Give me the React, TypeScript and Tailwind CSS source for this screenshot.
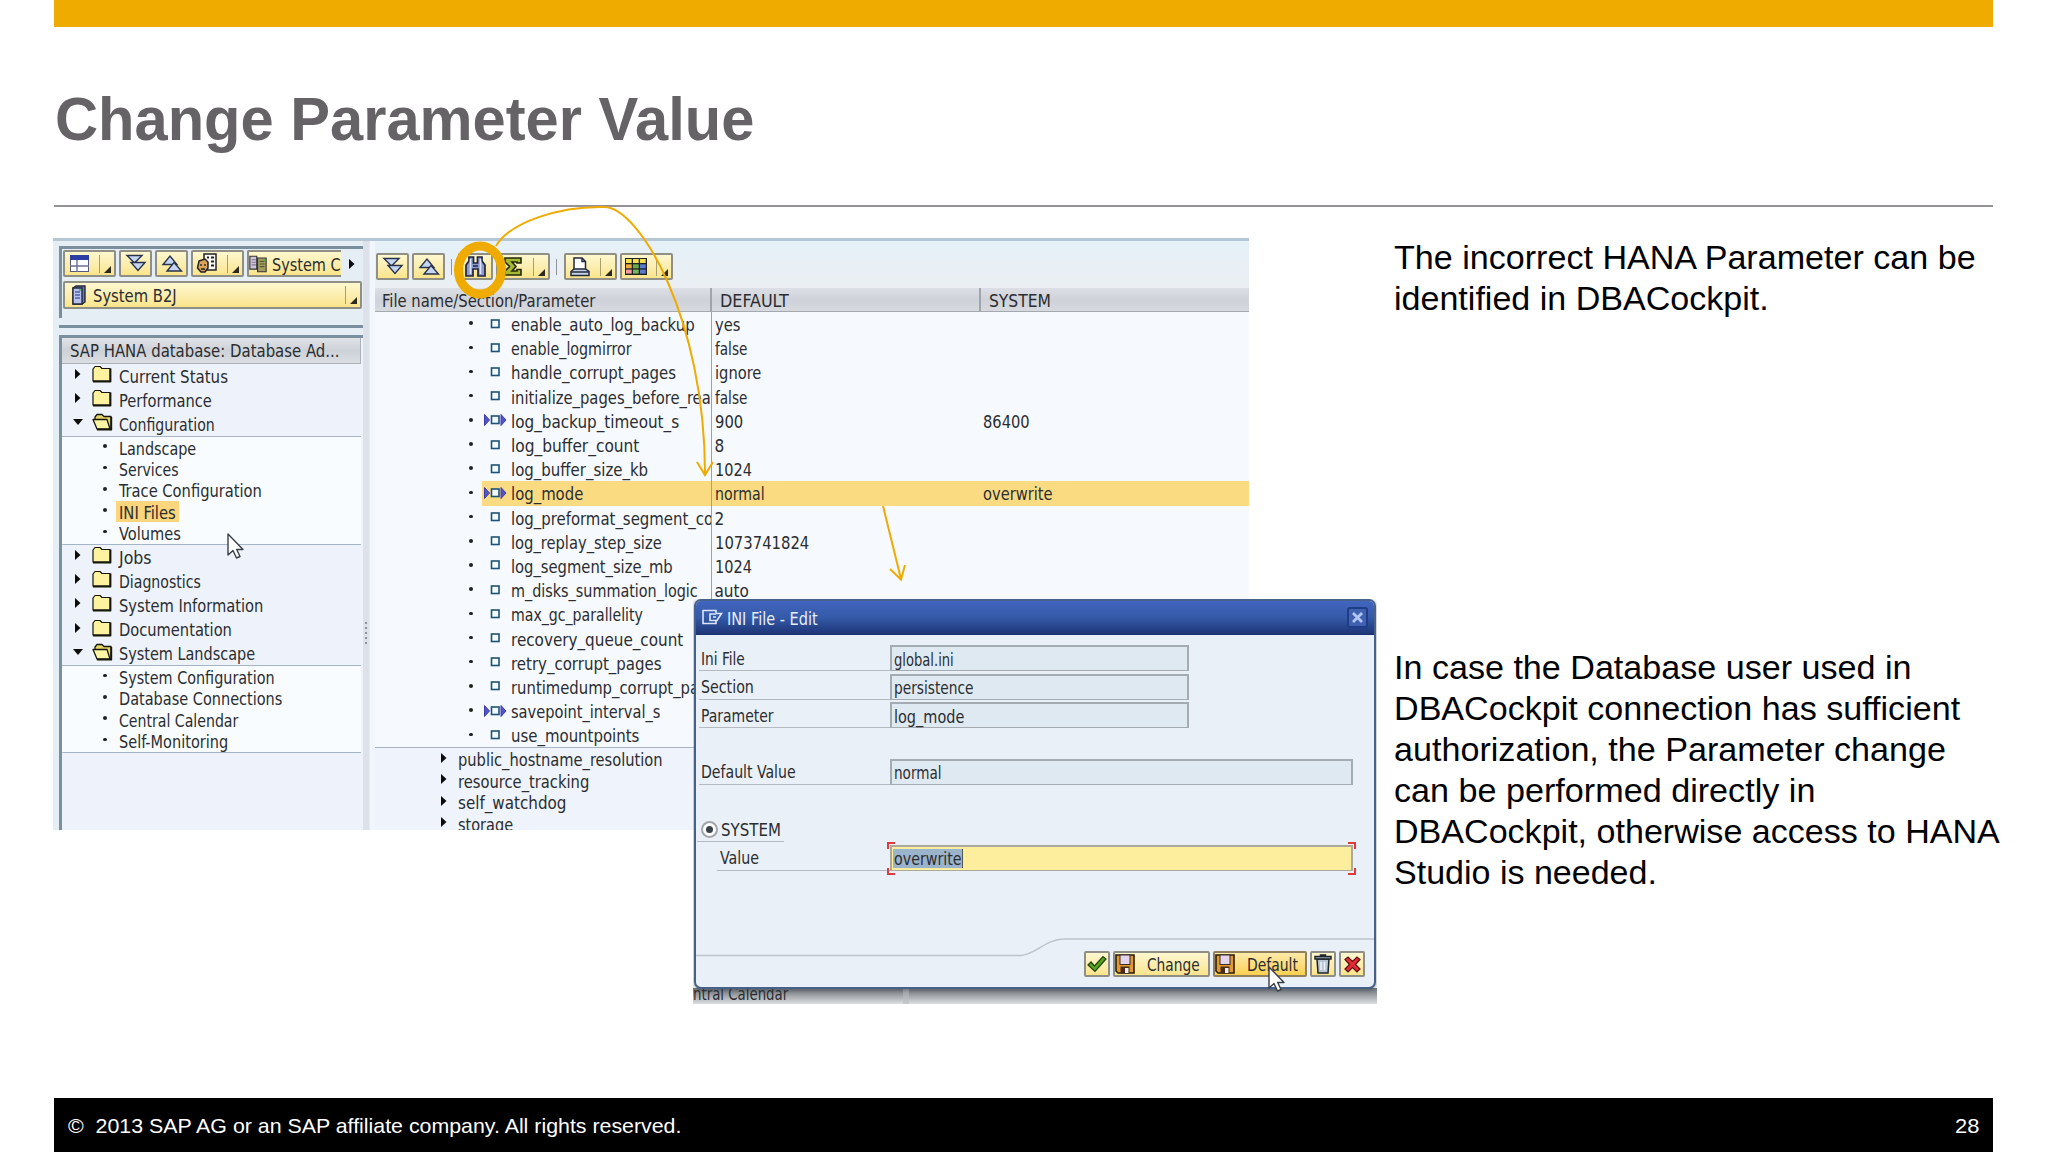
import { useLayoutEffect, useRef, useState } from "react";
import type { ReactNode } from "react";

/* One line of text condensed or widened to a given width. */
function Fit({ w, big, children }: { w: number; big?: boolean; children: ReactNode }) {
  const ref = useRef<HTMLSpanElement>(null);
  const [scale, setScale] = useState(1);
  useLayoutEffect(() => {
    if (ref.current) setScale(w / ref.current.offsetWidth);
  }, [w]);
  return (
    <span className={big ? "block shrink-0 whitespace-nowrap" : "block shrink-0 whitespace-nowrap pt-[3px]"} style={{ width: w }}>
      <span ref={ref} className="inline-block origin-left" style={{ transform: `scaleX(${scale})` }}>
        {children}
      </span>
    </span>
  );
}

const BTN =
  "flex shrink-0 items-center rounded-[2px] border-2 border-[#908f86] bg-linear-to-b from-[#fff7cf] via-[#fbeeb0] to-[#fbe48a]";

function DropMark() {
  return (
    <span className="flex h-[18px] w-[15px] shrink-0 items-end justify-center border-l border-[#a89f70]">
      <svg width="7" height="7" viewBox="0 0 7 7"><path d="M7 0V7H0Z" fill="#2a2a20" /></svg>
    </span>
  );
}

function ExpandIcon() {
  return (
    <svg width="22" height="19" viewBox="0 0 22 19" fill="#c5d6f3" stroke="#28324a" strokeWidth="1.4">
      <path d="M2 1.5H17L9.5 9Z" /><path d="M6 8.5H20L13 16.5Z" />
    </svg>
  );
}
function CollapseIcon() {
  return (
    <svg width="22" height="19" viewBox="0 0 22 19" fill="#c5d6f3" stroke="#28324a" strokeWidth="1.4">
      <path d="M2 10.5H16L9 2Z" /><path d="M6 17H20.500L13 8.500Z" />
    </svg>
  );
}
function LayoutIcon() {
  return (
    <svg width="19" height="17" viewBox="0 0 19 17">
      <rect x=".5" y=".5" width="18" height="16" fill="#fff" stroke="#55597a" />
      <rect x="0" y="0" width="19" height="5" fill="#2d3fa5" />
      <path d="M7 5V17M7 11H19M0 11H7" stroke="#6e7196" strokeWidth="1.4" />
    </svg>
  );
}
function PersonIcon() {
  return (
    <svg width="22" height="21" viewBox="0 0 22 21" stroke="#222">
      <rect x="8" y="1" width="12" height="16" fill="#f8f8f4" strokeWidth="1.500" />
      <path d="M11 4.500h2M15 4.500h3M15 8.500h3M15 12.500h3" strokeWidth="2" />
      <path d="M3 8L9 6L12 9V15L9 19H5L1.500 15Z" fill="#d9a35c" strokeWidth="1.500" />
      <path d="M5 11v2M9 11v2M5 16h4" strokeWidth="1.300" />
    </svg>
  );
}
function ServerPairIcon() {
  return (
    <svg width="21" height="20" viewBox="0 0 21 20" stroke="#333" strokeWidth="1.300">
      <path d="M1 1H9V16H1Z" fill="#cfc3da" /><path d="M3 5H8M3 8H8M3 11H8" stroke="#82779a" />
      <path d="M10 3H20V19H10Z" fill="#a39d62" /><path d="M12.500 7H18M12.500 10H18M12.500 13H18" stroke="#5c5930" />
      <path d="M17 5.500h2" stroke="#3cc04a" strokeWidth="2" />
    </svg>
  );
}
function ServerIcon() {
  return (
    <svg width="14" height="20" viewBox="0 0 14 20" stroke="#26283c" strokeWidth="1.400">
      <path d="M1 3L4 1H13V17L10 19H1Z" fill="#6b75b5" /><path d="M1 3H10V19H1Z" fill="#b6c1f0" />
      <path d="M3 7H8M3 10H8M3 13H8" stroke="#5661a4" />
      <path d="M7 5h2" stroke="#39b54a" strokeWidth="1.500" />
    </svg>
  );
}
function BinocularsIcon() {
  return (
    <svg width="21" height="21" viewBox="0 0 21 21">
      <path d="M4 1H8.500V7H12.500V1H17V5L20 9V20H13V13H8V20H1V9L4 5Z" fill="#8e9bd2" stroke="#20243c" strokeWidth="1.700" />
      <path d="M5.500 3V18M15.500 3V18" stroke="#dfe5fa" strokeWidth="1.600" />
      <path d="M8 10H13" stroke="#20243c" strokeWidth="1.500" />
    </svg>
  );
}
function SumIcon() {
  return (
    <svg width="18" height="19" viewBox="0 0 18 19">
      <path d="M1 1H17V6H13V5H8L12 9.500L8 14H13V12.500H17V18H1V14L5.500 9.500L1 5Z" fill="#a3ba32" stroke="#24280c" strokeWidth="1.600" />
    </svg>
  );
}
function PrinterIcon() {
  return (
    <svg width="20" height="20" viewBox="0 0 20 20" stroke="#222a3c" strokeWidth="1.500">
      <path d="M4 1H12L15.500 4.500V13H4Z" fill="#fff" /><path d="M12 1V4.500H15" fill="none" />
      <path d="M4 12L1 14.500V18.500H19V14.500L15.500 12Z" fill="#c6d2e6" /><path d="M1 15H19" />
    </svg>
  );
}
function GridIcon() {
  const fills = ["#f0e050", "#f0e050", "#f0e050", "#efac44", "#63b048", "#5b79cf", "#f3a0a0", "#74b95c", "#5b79cf"];
  return (
    <svg width="22" height="17" viewBox="0 0 22 17">
      <rect width="22" height="17" fill="#222" />
      {fills.map((f, i) => (
        <rect key={i} x={1 + (i % 3) * 7} y={1 + Math.floor(i / 3) * 5.3} width="5.700" height="4" fill={f} />
      ))}
    </svg>
  );
}
function FolderIcon({ open }: { open?: boolean }) {
  return open ? (
    <svg width="21" height="18" viewBox="0 0 21 18" stroke="#16160c" strokeWidth="1.300" strokeLinejoin="round">
      <path d="M3 6V4L5 1.500H10L12 3.500H19V16H6Z" fill="#e6d667" />
      <path d="M1 6.500H15L18 16H5Z" fill="#fdf5a6" /><path d="M19.300 4V16.700H5" fill="none" strokeWidth="1.800" />
    </svg>
  ) : (
    <svg width="21" height="18" viewBox="0 0 21 18" stroke="#16160c" strokeLinejoin="round">
      <path d="M1 4L3 1.500H8L10 3.500H18V16H1Z" fill="#fdf2a0" strokeWidth="1.200" />
      <path d="M18.500 3.500V16.500H1" fill="none" strokeWidth="1.800" />
    </svg>
  );
}
function Arrow({ down }: { down?: boolean }) {
  return down ? (
    <svg width="10" height="6" viewBox="0 0 10 6"><path d="M0 0H10L5 6Z" fill="#0c0c0c" /></svg>
  ) : (
    <svg width="6" height="10" viewBox="0 0 6 10"><path d="M0 0L5.500 5L0 10Z" fill="#0c0c0c" /></svg>
  );
}
function Cursor() {
  return (
    <svg width="18" height="27" viewBox="0 0 18 27">
      <path d="M1 1V22L6 17.500L9.500 25L13 23.500L9.700 16.500H16Z" fill="#fff" stroke="#3a3f48" strokeWidth="1.400" strokeLinejoin="round" />
    </svg>
  );
}
function FloppyIcon() {
  return (
    <svg width="20" height="20" viewBox="0 0 20 20">
      <path d="M1 1H19V19H3L1 17Z" fill="#e39a2c" stroke="#2c1c08" strokeWidth="1.600" />
      <rect x="5" y="1" width="10" height="9.500" fill="#e4d3ec" stroke="#3a2a2a" />
      <rect x="5.500" y="12.500" width="9" height="7" fill="#4a2c18" />
      <rect x="10" y="14" width="3.500" height="5" fill="#f4f0f0" />
    </svg>
  );
}

type Leaf = [string, number];

function Folder({ name, w, open }: { name: string; w: number; open?: boolean }) {
  return (
    <div className="flex h-[24.150px] items-center">
      <span className={open ? "flex w-[30px] pl-[11px] pb-[3px]" : "flex w-[30px] pl-[13px] pb-[3px]"}><Arrow down={open} /></span>
      <span className="w-[27px] pb-[3px]"><FolderIcon open={open} /></span>
      <Fit w={w}>{name}</Fit>
    </div>
  );
}
function Leaves({ items, active }: { items: Leaf[]; active?: string }) {
  return (
    <div className="border-y-[1.500px] border-[#a3b5c6] bg-[#f8fcfe]">
      {items.map(([n, w]) => (
        <div key={n} className="flex h-[21.350px] items-center">
          <span className="mb-[3px] ml-[41px] h-[3.500px] w-[3.500px] rounded-full bg-[#222]" />
          <span className={n === active ? "ml-[9px] flex h-full items-center bg-[#fbd67c] px-[3px]" : "ml-[12px] flex"}><Fit w={w}>{n}</Fit></span>
        </div>
      ))}
    </div>
  );
}

const closedTop: Leaf[] = [["Current Status", 109], ["Performance", 93]];
const closedMid: Leaf[] = [["Jobs", 33], ["Diagnostics", 82], ["System Information", 144], ["Documentation", 113]];

function NavPane() {
  return (
    <div className="flex w-[310px] shrink-0 flex-col pl-[6px] pt-[5px]">
      <div className="h-[72px] border-l-[3px] border-t-[3px] border-[#7b909f] pl-[1px] pt-[1px]">
        <div className="flex h-[27px] items-center gap-[3px]">
          <div className={`${BTN} h-[27px] w-[53px] justify-between pl-[5px]`}><LayoutIcon /><DropMark /></div>
          <div className={`${BTN} h-[27px] w-[33px] justify-center`}><ExpandIcon /></div>
          <div className={`${BTN} h-[27px] w-[33px] justify-center`}><CollapseIcon /></div>
          <div className={`${BTN} h-[27px] w-[53px] justify-between pl-[3px]`}><PersonIcon /><DropMark /></div>
          <div className="flex h-[27px] w-[94px] items-center gap-[5px] overflow-hidden rounded-l-[2px] border-y-2 border-l-2 border-[#908f86] bg-linear-to-b from-[#fff7cf] to-[#fbe48a]">
            <ServerPairIcon /><Fit w={69}>System C</Fit>
          </div>
          <span className="ml-[5px]"><Arrow /></span>
        </div>
        <div className={`${BTN} mt-[4px] h-[28px] w-[299px] pl-[7px]`}>
          <ServerIcon /><span className="ml-[7px]"><Fit w={84}>System B2J</Fit></span>
          <span className="ml-auto"><DropMark /></span>
        </div>
      </div>
      <div className="mt-[7px] h-[3px] bg-[#7b909f]" />
      <div className="mt-[7px] min-h-0 flex-1 border-l-[3px] border-t-[3px] border-[#7b909f] bg-[#eef3fb]">
        <div className="flex h-[25.500px] w-[299px] items-center border-b-[1.500px] border-r-[1.500px] border-[#a9b0b8] bg-linear-to-b from-[#e0e3e8] via-[#cdd2d8] to-[#dadee3] pl-[8px]">
          <Fit w={269}>SAP HANA database: Database Ad...</Fit>
        </div>
        <div className="w-[299px]">
          {closedTop.map(([n, w]) => <Folder key={n} name={n} w={w} />)}
          <Folder name="Configuration" w={96} open />
          <Leaves active="INI Files" items={[["Landscape", 77], ["Services", 60], ["Trace Configuration", 143], ["INI Files", 57], ["Volumes", 62]]} />
          {closedMid.map(([n, w]) => <Folder key={n} name={n} w={w} />)}
          <Folder name="System Landscape" w={136} open />
          <Leaves items={[["System Configuration", 156], ["Database Connections", 163], ["Central Calendar", 119], ["Self-Monitoring", 109]]} />
        </div>
      </div>
    </div>
  );
}

type Row = { n: string; w: number; d?: Leaf; s?: Leaf; mark?: boolean; hot?: boolean };
const rows: Row[] = [
  { n: "enable_auto_log_backup", w: 184, d: ["yes", 25] },
  { n: "enable_logmirror", w: 121, d: ["false", 32] },
  { n: "handle_corrupt_pages", w: 165, d: ["ignore", 46] },
  { n: "initialize_pages_before_rea", w: 200, d: ["false", 32] },
  { n: "log_backup_timeout_s", w: 168, d: ["900", 28], s: ["86400", 47], mark: true },
  { n: "log_buffer_count", w: 128, d: ["8", 10] },
  { n: "log_buffer_size_kb", w: 137, d: ["1024", 37] },
  { n: "log_mode", w: 72, d: ["normal", 50], s: ["overwrite", 70], mark: true, hot: true },
  { n: "log_preformat_segment_co", w: 202, d: ["2", 10] },
  { n: "log_replay_step_size", w: 151, d: ["1073741824", 94] },
  { n: "log_segment_size_mb", w: 162, d: ["1024", 37] },
  { n: "m_disks_summation_logic", w: 187, d: ["auto", 34] },
  { n: "max_gc_parallelity", w: 132 },
  { n: "recovery_queue_count", w: 172 },
  { n: "retry_corrupt_pages", w: 151 },
  { n: "runtimedump_corrupt_pa", w: 188 },
  { n: "savepoint_interval_s", w: 149, mark: true },
  { n: "use_mountpoints", w: 128 },
];
const sections: Leaf[] = [["public_hostname_resolution", 205], ["resource_tracking", 131], ["self_watchdog", 108], ["storage", 55]];

function ParamRow({ r }: { r: Row }) {
  return (
    <div className="flex h-[24.200px] items-center">
      <span className="mb-[2px] ml-[94px] h-[3.500px] w-[3.500px] shrink-0 rounded-full bg-[#222]" />
      <div className={r.hot ? "ml-[9.500px] flex h-full flex-1 items-center bg-[#fadb82]" : "ml-[9.500px] flex h-full flex-1 items-center"}>
        <div className="flex h-full w-[230px] shrink-0 items-center overflow-hidden border-r-[1.500px] border-[#9aa1a8] pl-[2px]">
          <span className="mb-[1px] flex w-[27px] shrink-0">
            <svg width="23" height="12" viewBox="0 0 23 12">
              {r.mark && <path d="M.5.5L5.500 6L.5 11.500ZM17 .5L22 6L17 11.500Z" fill="#5453c8" stroke="#3f3dae" />}
              <rect x="7.500" y="2" width="7.500" height="7.500" fill="#f2fbff" stroke="#1d5377" strokeWidth="1.600" />
            </svg>
          </span>
          <Fit w={r.w}>{r.n}</Fit>
        </div>
        <div className="w-[270.500px] shrink-0 pl-[2.500px]">{r.d && <Fit w={r.d[1]}>{r.d[0]}</Fit>}</div>
        {r.s && <Fit w={r.s[1]}>{r.s[0]}</Fit>}
      </div>
    </div>
  );
}

function ParamPane() {
  return (
    <div className="flex min-w-0 flex-1 flex-col overflow-hidden bg-[#f6f9fe]">
      <div className="flex h-[47px] shrink-0 items-center bg-linear-to-b from-[#e5f0f8] to-[#ebeff3] pl-px pt-[4px]">
        <div className={`${BTN} h-[27px] w-[33px] justify-center`}><ExpandIcon /></div>
        <div className={`${BTN} ml-[3px] h-[27px] w-[33px] justify-center`}><CollapseIcon /></div>
        <span className="ml-[6px] h-[16px] w-px bg-[#8f9598]" />
        <div className={`${BTN} ml-[6px] h-[27px] w-[35px] justify-center`}><BinocularsIcon /></div>
        <div className={`${BTN} ml-[3px] h-[27px] w-[54px] justify-between pl-[6px]`}><SumIcon /><DropMark /></div>
        <span className="ml-[6px] h-[16px] w-px bg-[#8f9598]" />
        <div className={`${BTN} ml-[7px] h-[27px] w-[53px] justify-between pl-[4px]`}><PrinterIcon /><DropMark /></div>
        <div className={`${BTN} ml-[3px] h-[27px] w-[53px] justify-between pl-[3px]`}><GridIcon /><DropMark /></div>
      </div>
      <div className="flex h-[24px] shrink-0 items-center border-b-[1.500px] border-[#a4a9b0] bg-linear-to-b from-[#dcdfe5] via-[#cfd2d9] to-[#d6dadf]">
        <div className="flex h-full w-[337px] items-center border-r-2 border-[#a0a5ab] pl-[7px]"><Fit w={213}>File name/Section/Parameter</Fit></div>
        <div className="flex h-full w-[269px] items-center border-r-2 border-[#a0a5ab] pl-[8px]"><Fit w={69}>DEFAULT</Fit></div>
        <span className="ml-[8px]"><Fit w={62}>SYSTEM</Fit></span>
      </div>
      <div className="border-b-[1.500px] border-[#a3b5c6]">{rows.map((r) => <ParamRow key={r.n} r={r} />)}</div>
      <div className="flex-1 bg-[#eff3fb]">
        {sections.map(([n, w]) => (
          <div key={n} className="flex h-[21.500px] items-center">
            <span className="mb-[3px] ml-[66px] w-[16.500px]"><Arrow /></span>
            <Fit w={w}>{n}</Fit>
          </div>
        ))}
      </div>
    </div>
  );
}

const FIELD =
  "flex h-[26px] items-center border-b-[1.500px] border-l-2 border-r-2 border-t-2 border-[#a4abb1] bg-[#dfe9f2] pl-[2px]";

function FieldRow({ label, lw, value, vw, wide }: { label: string; lw: number; value: string; vw: number; wide?: boolean }) {
  return (
    <div className="flex h-[26px]">
      <div className="flex w-[191px] items-center border-b-[1.500px] border-[#b4babf] pl-[2px]"><Fit w={lw}>{label}</Fit></div>
      <div className={wide ? `${FIELD} w-[463px]` : `${FIELD} w-[299px]`}><Fit w={vw}>{value}</Fit></div>
    </div>
  );
}

function Dialog() {
  return (
    <div className="absolute left-[693px] top-[599px] h-[405px] w-[684px] overflow-hidden">
      {/* strip of the window behind the dialog */}
      <div className="absolute inset-x-0 bottom-0 flex h-[16px] items-end bg-linear-to-b from-[#74797f] from-5% to-[#dcdfe2]">
        <div className="flex h-[22px] w-[216px] items-center border-r-[6px] border-[#b9bcc0]/60"><Fit w={95}>ntral Calendar</Fit></div>
      </div>
      <div className="relative ml-px flex h-[390px] w-[682px] flex-col overflow-hidden rounded-[7px] border-2 border-[#46618a] bg-[#eaf0f7] shadow-[0_1px_4px_rgba(50,55,60,0.5)]">
        <div className="flex h-[34px] shrink-0 items-center border-b border-[#1a3270] bg-linear-to-b from-[#4265bf] via-[#345aa8] to-[#1e3577] pl-[6px] pr-[6px] text-[#e8eefb]">
          <svg width="21" height="17" viewBox="0 0 21 17" fill="none" stroke="#dce6fa" strokeWidth="1.600">
            <path d="M14 4V1.500H1V14.500H14V12" /><path d="M14 4.500H19.500L15 11.500H8V5H14M11 8H14" />
          </svg>
          <span className="ml-[4px]"><Fit w={91}>INI File - Edit</Fit></span>
          <span className="ml-auto flex h-[21px] w-[21px] items-center justify-center rounded-[3px] border-2 border-[#1f3c86] bg-[#3f61b0]">
            <svg width="11" height="11" viewBox="0 0 11 11" stroke="#b4c6f8" strokeWidth="2.800"><path d="M1 1L10 10M10 1L1 10" /></svg>
          </span>
        </div>
        <div className="flex flex-col gap-[2.500px] pl-[3px] pt-[10px]">
          <FieldRow label="Ini File" lw={44} value="global.ini" vw={60} />
          <FieldRow label="Section" lw={53} value="persistence" vw={80} />
          <FieldRow label="Parameter" lw={73} value="log_mode" vw={70} />
          <div className="mt-[28px]"><FieldRow label="Default Value" lw={95} value="normal" vw={48} wide /></div>
        </div>
        <div className="ml-[1px] mt-[33px] flex h-[24px] w-[87px] items-center gap-[3px] border-b-[1.500px] border-[#b4babf] pl-[4px]">
          <span className="flex h-[17px] w-[17px] shrink-0 items-center justify-center rounded-full border-2 border-[#a2a6ab] bg-white"><span className="h-[7px] w-[7px] rounded-full bg-[#3c4148]" /></span>
          <Fit w={60}>SYSTEM</Fit>
        </div>
        <div className="mt-[3px] flex h-[26px] pl-[21px]">
          <div className="flex w-[173px] items-center border-b-[1.500px] border-[#b4babf] pl-[3px]"><Fit w={39}>Value</Fit></div>
          <div className="relative flex h-[26px] w-[463px] items-center border-x-2 border-b-[1.500px] border-t-2 border-[#aaa99c] bg-[#fdee9d] pl-px">
            <span className="flex h-[19px] items-center border-r border-[#53564f] bg-[#9bb3cb] pl-px"><Fit w={68}>overwrite</Fit></span>
            <span className="absolute -left-[5px] -top-[5px] h-[7px] w-[8px] border-l-2 border-t-2 border-[#e0393e]" />
            <span className="absolute -bottom-[5px] -left-[5px] h-[7px] w-[8px] border-b-2 border-l-2 border-[#e0393e]" />
            <span className="absolute -right-[5px] -top-[5px] h-[7px] w-[8px] border-r-2 border-t-2 border-[#e0393e]" />
            <span className="absolute -bottom-[5px] -right-[5px] h-[7px] w-[8px] border-b-2 border-r-2 border-[#e0393e]" />
          </div>
        </div>
        <svg className="absolute bottom-[29px] left-0" width="680" height="22" viewBox="0 0 680 22" fill="none" stroke="#bcc3cc" strokeWidth="1.500">
          <path d="M0 19.500H324C338 19.500 350 3 368 3H680" />
        </svg>
        <div className="absolute bottom-[10px] right-[9px] flex h-[26px] gap-[3px]">
          <div className={`${BTN} w-[26px] justify-center`}>
            <svg width="20" height="18" viewBox="0 0 20 18"><path d="M1 10L4 7L7.500 11L16 1.500L19 4L8 16.500Z" fill="#55a51e" stroke="#21400d" strokeWidth="1.200" /></svg>
          </div>
          <div className={`${BTN} w-[97px]`}><FloppyIcon /><span className="ml-[12px]"><Fit w={53}>Change</Fit></span></div>
          <div className="flex w-[94px] items-center rounded-[2px] border-2 border-[#908060] bg-linear-to-b from-[#fdeaa8] to-[#fbd04e]"><FloppyIcon /><span className="ml-[12px]"><Fit w={51}>Default</Fit></span></div>
          <div className={`${BTN} w-[26px] justify-center`}>
            <svg width="18" height="20" viewBox="0 0 18 20" stroke="#1f242c" strokeWidth="1.500">
              <path d="M3 5H15L14 19H4Z" fill="#b9c4d2" /><path d="M7 8V16M10.500 8V16" stroke="#eef3f8" /><path d="M1 2.500H17V5H1ZM6.500 2.500V1H11.500V2.500" fill="#97a4b4" />
            </svg>
          </div>
          <div className={`${BTN} w-[26px] justify-center`}>
            <svg width="17" height="17" viewBox="0 0 17 17"><path d="M1 3.500L4 1L8.500 5.500L13 1L16 3.500L11.500 8.500L16 13L13 16L8.500 11.500L4 16L1 13L5.500 8.500Z" fill="#e02b30" stroke="#5c0d12" strokeWidth="1.200" /></svg>
          </div>
        </div>
      </div>
      <span className="absolute left-[575px] top-[367px]"><Cursor /></span>
    </div>
  );
}

export default function App() {
  return (
    <main className="relative flex h-[1152px] w-[2048px] flex-col overflow-hidden bg-white px-[54px] font-['Liberation_Sans',Arial,sans-serif] text-black">
      <div className="h-[27px] w-[1939px] shrink-0 bg-[#efab00]" />
      <header className="flex h-[180px] w-[1939px] shrink-0 items-center border-b-2 border-[#949295] pl-[1px] pt-[7px]">
        <h1 className="text-[61px] font-bold leading-none text-[#666366]"><Fit big w={699}>Change Parameter Value</Fit></h1>
      </header>
      <div className="flex min-h-0 flex-1">
        <section className="-ml-px mt-[31px] flex h-[592px] w-[1196px] shrink-0 border-t-[3px] border-[#b7c6d3] bg-[#e6eef5] font-['DejaVu_Sans_Condensed','DejaVu_Sans',sans-serif] text-[17px] leading-none text-[#2b2d31]">
          <NavPane />
          <div className="flex w-[12px] shrink-0 flex-col items-start bg-linear-to-r from-[#dde2ea] from-50% to-[#f1f6fc] to-60%">
            <div className="ml-[2px] mt-[381px] flex flex-col gap-[3px]">
              {[0, 1, 2, 3, 4].map((i) => <span key={i} className="h-[2px] w-[2px] bg-[#8d949c]" />)}
            </div>
          </div>
          <ParamPane />
        </section>
        <section className="ml-[145px] mt-[30px] flex flex-col gap-[328px] text-[33.500px] leading-[41px]">
          <div>
            <Fit big w={582}>The incorrect HANA Parameter can be</Fit>
            <Fit big w={375}>identified in DBACockpit.</Fit>
          </div>
          <div>
            <Fit big w={517}>In case the Database user used in</Fit>
            <Fit big w={566}>DBACockpit connection has sufficient</Fit>
            <Fit big w={552}>authorization, the Parameter change</Fit>
            <Fit big w={421}>can be performed directly in</Fit>
            <Fit big w={606}>DBACockpit, otherwise access to HANA</Fit>
            <Fit big w={263}>Studio is needed.</Fit>
          </div>
        </section>
      </div>
      <footer className="flex h-[54px] w-[1939px] shrink-0 items-center justify-between bg-black pl-[14px] pr-[14px] pt-[2px] text-[21px] text-white">
        <Fit big w={613}>©&nbsp; 2013 SAP AG or an SAP affiliate company. All rights reserved.</Fit>
        <Fit big w={24}>28</Fit>
      </footer>

      <div className="font-['DejaVu_Sans_Condensed','DejaVu_Sans',sans-serif] text-[17px] leading-none text-[#2b2d31]"><Dialog /></div>
      <span className="absolute left-[227px] top-[533px]"><Cursor /></span>
      <svg className="pointer-events-none absolute left-0 top-0" width="1300" height="620" viewBox="0 0 1300 620" fill="none" stroke="#efab00" strokeWidth="2">
        <ellipse cx="480" cy="270" rx="21.500" ry="24" strokeWidth="9" />
        <path d="M496 246C510 222 560 206 604 207C640 207 705 320 705 474M697 462L705 475L713 462" />
        <path d="M883 506L901 579M890 569L901 579.500L905 565" />
      </svg>
    </main>
  );
}
